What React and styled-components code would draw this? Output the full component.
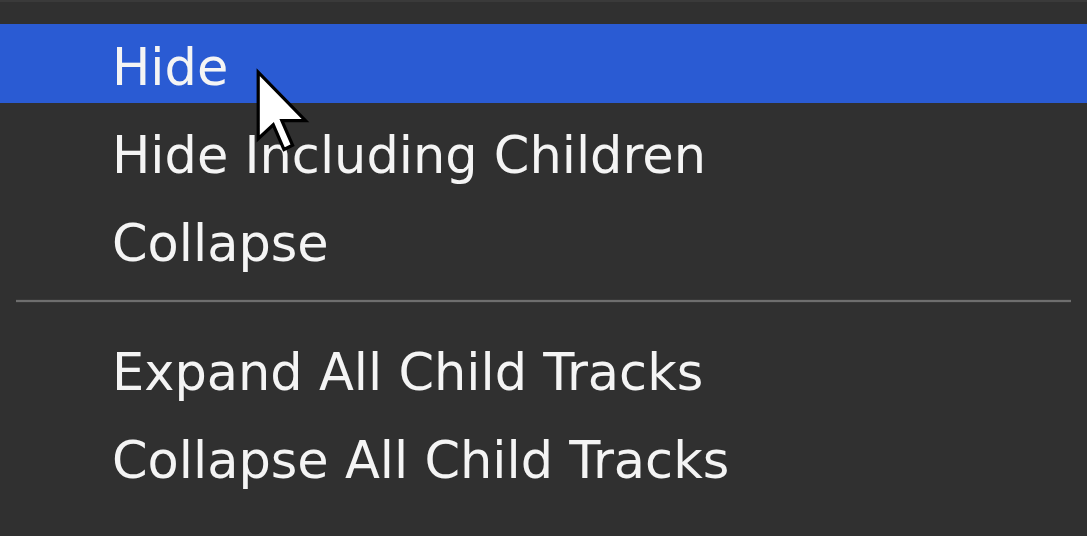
import styled, { createGlobalStyle } from "styled-components";

const GlobalStyle = createGlobalStyle`
  html, body {
    margin: 0;
    padding: 0;
    background: #303030;
  }
`;

const Menu = styled.div`
  position: relative;
  width: 1087px;
  height: 536px;
  box-sizing: border-box;
  padding-top: 22px;
  display: flex;
  flex-direction: column;
  gap: 9px;
  background: #303030;
  border-top: 2px solid #3a3a3a;
  overflow: hidden;
  font-family: "DejaVu Sans", Verdana, sans-serif;
`;

const Item = styled.div`
  height: 79px;
  box-sizing: border-box;
  padding: 5px 0 0 112px;
  line-height: 77px;
  font-size: 51px;
  color: #f4f4f4;
  white-space: nowrap;
  overflow: visible;
  background: ${(p) => (p.$active ? "#2a5bd3" : "transparent")};
`;

const Separator = styled.div`
  height: 2px;
  margin: 12px 16px 18px;
  background: #6e6e6e;
  box-shadow: 0 -1px 0 #383838, 0 1px 0 #383838;
`;

const Pointer = styled.svg`
  position: absolute;
  left: 256px;
  top: 68px;
  width: 56px;
  height: 86px;
  overflow: visible;
`;

const items = [
  { label: "Hide", active: true },
  { label: "Hide Including Children" },
  { label: "Collapse" },
  { separator: true },
  { label: "Expand All Child Tracks" },
  { label: "Collapse All Child Tracks" },
];

function Cursor() {
  return (
    <Pointer viewBox="0 0 52 80">
      <path
        d="M2 2 L2 64 L16 51 L26 74 L34 70 L24 47 L46 47 Z"
        fill="#ffffff"
        stroke="#000000"
        strokeWidth="3"
        strokeLinejoin="miter"
      />
    </Pointer>
  );
}

export default function App() {
  return (
    <>
      <GlobalStyle />
      <Menu>
        {items.map((item, i) =>
          item.separator ? (
            <Separator key={i} />
          ) : (
            <Item key={i} $active={item.active}>
              {item.label}
            </Item>
          )
        )}
        <Cursor />
      </Menu>
    </>
  );
}
